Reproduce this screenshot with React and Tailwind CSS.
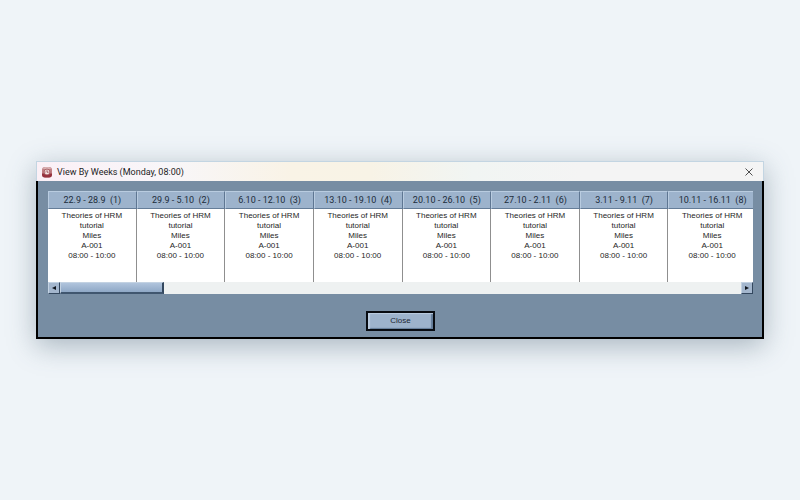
import React from "react";

const weeks = [
    "22.9 - 28.9  (1)",
    "29.9 - 5.10  (2)",
    "6.10 - 12.10  (3)",
    "13.10 - 19.10  (4)",
    "20.10 - 26.10  (5)",
    "27.10 - 2.11  (6)",
    "3.11 - 9.11  (7)",
    "10.11 - 16.11  (8)",
];

const lesson = ["Theories of HRM", "tutorial", "Miles", "A-001", "08:00 - 10:00"];

const ClockIcon = () => (
    <svg viewBox="0 0 12 12" className="h-3 w-3" aria-hidden="true">
        <rect x="1" y="1" width="10" height="10.500" rx="3" fill="#c08084" />
        <path d="M1 7.500h10v1a3 3 0 0 1-3 3h-4a3 3 0 0 1-3-3z" fill="#96323e" />
        <path d="M2 3a2.500 2.500 0 0 1 2-2h4a2.500 2.500 0 0 1 2 2z" fill="#d9b0b2" />
        <circle cx="6" cy="6" r="2.900" fill="#f4e6e4" stroke="#9c4950" strokeWidth="0.8" />
        <path d="M6 4.200v2h1.600M4.200 6h.6" fill="none" stroke="#8a3038" strokeWidth="0.8" />
    </svg>
);

const TitleBar = () => (
    <header className="flex h-5 items-center border border-b-0 border-[#c3d5e2] bg-[linear-gradient(to_right,#fbf0f6_0%,#f8f6f9_18%,#f9f3e6_35%,#f8f3e6_46%,#f1f5f3_60%,#f4f4f4_75%)] pr-2 pl-1">
        <ClockIcon />
        <h1 className="ml-1 flex-1 font-[Roboto,'Open_Sans',sans-serif] text-[9px] leading-3 text-[#1c1c1c]">
            View By Weeks (Monday, 08:00)
        </h1>
        <button type="button" aria-label="Close window" className="flex h-3 w-3 items-center justify-center">
            <svg viewBox="0 0 8 8" className="h-2 w-2">
                <path d="M.5.5l7 7M7.5.5l-7 7" stroke="#3c3c3c" strokeWidth="0.9" />
            </svg>
        </button>
    </header>
);

const WeeksTable = () => (
    <div className="overflow-hidden bg-white">
        <table className="w-[calc(100%+4px)] table-fixed border-separate border-spacing-0">
            <thead>
                <tr>
                    {weeks.map((week) => (
                        <th
                            key={week}
                            className="h-[18px] border border-t-[#b9cce0] border-r-[#5e7692] border-b-[#657d98] border-l-[#b9cce0] bg-[#9db3cc] p-0 text-center font-[Roboto,'Liberation_Sans',sans-serif] text-[9px] leading-4 font-normal whitespace-pre text-[#202c3a]"
                        >
                            {week}
                        </th>
                    ))}
                </tr>
            </thead>
            <tbody>
                <tr>
                    {weeks.map((week) => (
                        <td key={week} className="h-[73px] border-r border-[#8f8f8f] p-0 pt-0.5 text-center align-top text-[8px] leading-[10px] text-[#262626]">
                            {lesson.map((line) => (
                                <div key={line}>{line}</div>
                            ))}
                        </td>
                    ))}
                </tr>
            </tbody>
        </table>
    </div>
);

const ScrollButton = ({ label, d }) => (
    <button
        type="button"
        aria-label={label}
        className="flex w-3 items-center justify-center border border-t-[#c3d2e2] border-r-[#33475e] border-b-[#33475e] border-l-[#c3d2e2] bg-[#a3b6cd]"
    >
        <svg viewBox="0 0 4 4" className="h-1 w-1">
            <path d={d} fill="#10161e" />
        </svg>
    </button>
);

const ScrollBar = () => (
    <div className="flex h-3 bg-[#eef1f1]">
        <ScrollButton label="Scroll left" d="M4 0v4l-4-2z" />
        <div className="flex-1">
            <div className="h-full w-[15.2%] border border-t-[#c3d2e2] border-r-2 border-r-[#33475e] border-b-2 border-b-[#40566f] border-l-[#c3d2e2] bg-linear-to-b from-[#b0c4dc] to-[#8fa8c6]" />
        </div>
        <ScrollButton label="Scroll right" d="M0 0v4l4-2z" />
    </div>
);

const App = () => (
    <main className="flex min-h-screen items-center bg-[#eff4f8] px-9 font-['Liberation_Sans',Arial,sans-serif]">
        <section className="w-full shadow-[0_7px_26px_rgba(65,90,110,0.4)]">
            <TitleBar />
            <div className="border-x-2 border-b-2 border-black bg-[#778da3] pt-[10px] pr-[9px] pb-[6px] pl-[10px]">
                <WeeksTable />
                <ScrollBar />
                <div className="mt-[17px] flex justify-center">
                    <button
                        type="button"
                        className="h-5 w-[69px] border-2 border-[#080c12] bg-[#9db3cc] text-[8px] leading-4 text-[#1c2734] shadow-[inset_2px_1px_1px_#bccde0,inset_-2px_-1px_1px_#647d9a]"
                    >
                        Close
                    </button>
                </div>
            </div>
        </section>
    </main>
);

export default App;
